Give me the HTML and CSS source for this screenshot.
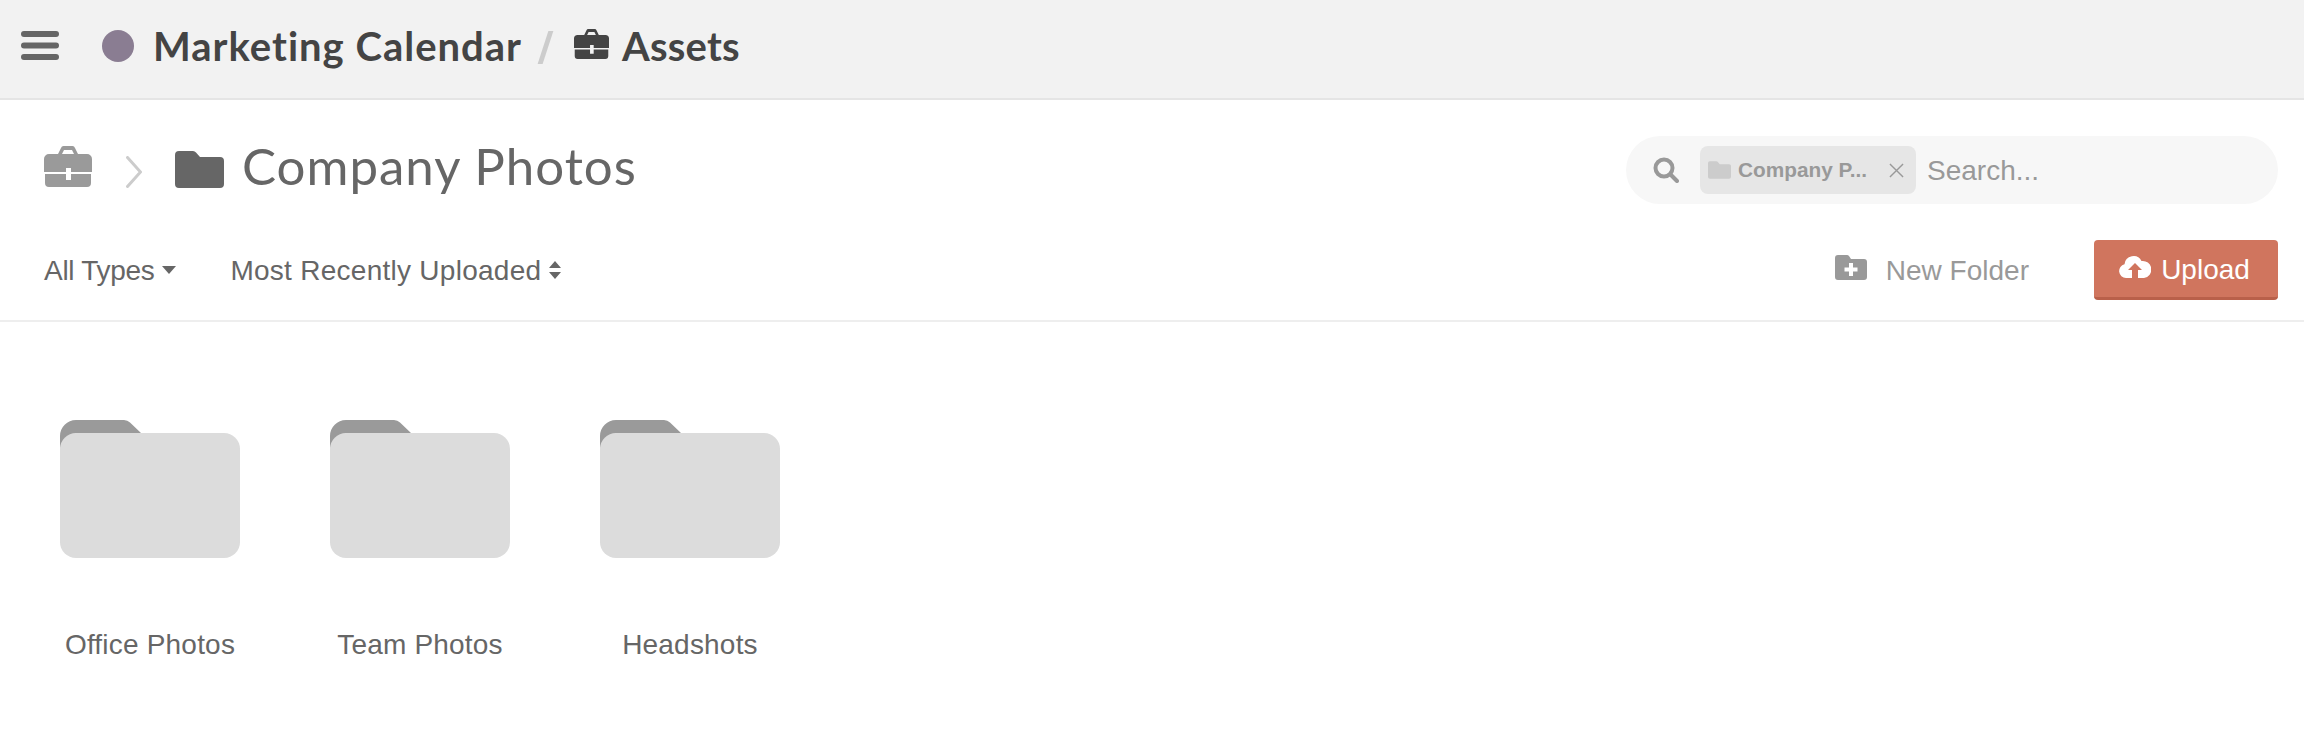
FILE: index.html
```html
<!DOCTYPE html>
<html lang="en">
<head>
    <meta charset="UTF-8">
    <meta name="viewport" content="width=device-width, initial-scale=1.0">
    <title>Assets</title>
    <link rel="stylesheet" href="styles.css">
</head>
<body>
    <svg class="defs" width="0" height="0">
        <symbol id="briefcase" viewBox="0 0 48 41">
            <path d="M14 8l3-6a3 3 0 0 1 3-2h8a3 3 0 0 1 3 2l3 6h-4l-2-4H20l-2 4z"/>
            <path d="M5 8h38a5 5 0 0 1 5 5v13H27v-4h-5v4H0V13a5 5 0 0 1 5-5z"/>
            <path d="M1 28h21v6h5v-6h20v9a4 4 0 0 1-4 4H5a4 4 0 0 1-4-4z"/>
        </symbol>
        <symbol id="folder" viewBox="0 0 49 37">
            <path d="M4 0h14a4 4 0 0 1 3 1.5L25 6h20a4 4 0 0 1 4 4v23a4 4 0 0 1-4 4H4a4 4 0 0 1-4-4V4a4 4 0 0 1 4-4z"/>
        </symbol>
        <symbol id="big-folder" viewBox="0 0 180 138">
            <path fill="#9a9a9a" d="M16 0h48a9 9 0 0 1 6 2.500L81 13H16L0 28V16A16 16 0 0 1 16 0z"/>
            <rect y="13" width="180" height="125" rx="16" fill="#dcdcdc"/>
        </symbol>
    </svg>

    <header class="topbar">
        <svg class="menu-icon" viewBox="0 0 38 29"><rect width="38" height="6" rx="3"/><rect y="11.5" width="38" height="6" rx="3"/><rect y="23" width="38" height="6" rx="3"/></svg>
        <span class="project-dot"></span>
        <span class="crumb crumb-project">Marketing Calendar</span>
        <span class="crumb-sep"></span>
        <svg class="crumb-icon"><use href="#briefcase"/></svg>
        <span class="crumb">Assets</span>
    </header>

    <section class="toolbar">
        <div class="title-row">
            <svg class="root-icon"><use href="#briefcase"/></svg>
            <svg class="chevron" viewBox="0 0 16 32"><path d="M1.5 1.5 14.500 16 1.500 30.500" fill="none" stroke="#ccc" stroke-width="3" stroke-linecap="round"/></svg>
            <svg class="title-folder"><use href="#folder"/></svg>
            <h1>Company Photos</h1>
            <div class="search">
                <svg class="search-icon" viewBox="0 0 26 26"><circle cx="11" cy="11" r="8.500" fill="none" stroke="#999" stroke-width="4"/><path d="M17.500 17.500 24 24" stroke="#999" stroke-width="4" stroke-linecap="round"/></svg>
                <div class="chip">
                    <svg class="chip-folder"><use href="#folder"/></svg>
                    <span class="chip-text">Company P...</span>
                    <svg class="chip-close" viewBox="0 0 16 16"><path d="M1 1 15 15M15 1 1 15" stroke="#999" stroke-width="1.500"/></svg>
                </div>
                <span class="search-text">Search...</span>
            </div>
        </div>
        <div class="filter-row">
            <span class="filter filter-type">All Types<svg class="caret" viewBox="0 0 14 8"><path d="M0 0h14L7 8z"/></svg></span>
            <span class="filter sort">Most Recently Uploaded<svg class="sort-icon" viewBox="0 0 14 18"><path d="M7 0l6 7H1zM7 18l-6-7h12z"/></svg></span>
            <span class="new-folder">
                <svg class="new-folder-icon" viewBox="0 0 32 25"><path fill-rule="evenodd" d="M3 0h9a3 3 0 0 1 2 1l2 3h13a3 3 0 0 1 3 3v15a3 3 0 0 1-3 3H3a3 3 0 0 1-3-3V3a3 3 0 0 1 3-3zM14 8v4.500H9.500v4H14V21h4v-4.500h4.500v-4H18V8z"/></svg>
                New Folder
            </span>
            <button class="upload-btn">
                <svg class="cloud-icon" viewBox="0 0 32 24"><path fill-rule="evenodd" d="M7 23a7 7 0 0 1-1.500-13.800A9 9 0 0 1 22.500 6 8.500 8.500 0 0 1 25 23h-6v-8h4l-7-7-7 7h4v8z"/></svg>
                Upload
            </button>
        </div>
    </section>

    <main class="folders">
        <div class="folder-item">
            <svg class="big-folder"><use href="#big-folder"/></svg>
            <span>Office Photos</span>
        </div>
        <div class="folder-item">
            <svg class="big-folder"><use href="#big-folder"/></svg>
            <span>Team Photos</span>
        </div>
        <div class="folder-item">
            <svg class="big-folder"><use href="#big-folder"/></svg>
            <span>Headshots</span>
        </div>
    </main>
</body>
</html>
```

FILE: styles.css
```css
body {
    margin: 0;
    background-color: #fff;
    font-family: "Liberation Sans", Arial, sans-serif;
    font-size: 28px;
    color: #666;
    overflow: hidden;
}

.defs {
    position: absolute;
}

/* top bar */
.topbar {
    height: 98px;
    display: flex;
    align-items: center;
    padding-left: 21px;
    background-color: #f2f2f2;
    border-bottom: 2px solid #e5e5e5;
}

.menu-icon {
    width: 38px;
    height: 29px;
    fill: #666;
    margin-right: 43px;
    margin-top: -7px;
}

.project-dot {
    width: 32px;
    height: 32px;
    border-radius: 50%;
    background-color: #8a7d92;
    margin-right: 19px;
    margin-top: -6px;
}

.crumb {
    font-family: Lato, sans-serif;
    font-weight: 700;
    font-size: 40px;
    line-height: 48px;
    letter-spacing: 0.2px;
    color: #444;
    margin-top: -6px;
}

.crumb-project {
    letter-spacing: 1px;
}

.crumb-sep {
    width: 5px;
    height: 33px;
    background-color: #ccc;
    transform: skewX(-18deg);
    margin: -3px 26px 0 21px;
}

.crumb-icon {
    width: 35px;
    height: 30px;
    fill: #444;
    margin-right: 13px;
    margin-top: -11px;
}

/* toolbar */
.toolbar {
    padding: 36px 26px 0 44px;
    height: 184px;
    border-bottom: 2px solid #eee;
}

.title-row {
    display: flex;
    align-items: center;
    height: 68px;
}

.root-icon {
    width: 48px;
    height: 41px;
    fill: #9a9a9a;
    margin-top: -8px;
}

.chevron {
    width: 16px;
    height: 32px;
    margin-left: 34px;
    margin-right: 33px;
    margin-top: 3px;
}

.title-folder {
    width: 49px;
    height: 37px;
    fill: #666;
    margin-top: -2px;
}

h1 {
    margin: -10px 0 0 18px;
    font-family: Lato, sans-serif;
    font-weight: 400;
    font-size: 51px;
    letter-spacing: 1px;
    color: #666;
    flex: 1;
}

.search {
    width: 652px;
    height: 68px;
    box-sizing: border-box;
    display: flex;
    align-items: center;
    padding-left: 27px;
    background-color: #f7f7f7;
    border-radius: 34px;
}

.search-icon {
    width: 26px;
    height: 26px;
    margin-right: 21px;
}

.chip {
    width: 216px;
    height: 48px;
    box-sizing: border-box;
    display: flex;
    align-items: center;
    padding-left: 8px;
    background-color: #e6e6e6;
    border-radius: 8px;
}

.chip-folder {
    width: 23px;
    height: 18px;
    fill: #ccc;
}

.chip-text {
    margin-left: 7px;
    font-size: 20.8px;
    font-weight: 700;
    color: #999;
}

.chip-close {
    width: 15px;
    height: 15px;
    margin-left: 22px;
}

.search-text {
    margin-left: 11px;
    padding-top: 2px;
    color: #999;
}

.filter-row {
    display: flex;
    align-items: center;
    height: 60px;
    margin-top: 36px;
}

.filter {
    display: flex;
    align-items: center;
    padding-top: 2px;
    letter-spacing: 0.27px;
}

.filter-type {
    letter-spacing: -0.3px;
}

.caret {
    width: 14px;
    height: 8px;
    fill: #666;
    margin-left: 8px;
    margin-top: -2px;
}

.sort {
    margin-left: 54px;
    flex: 1;
}

.sort-icon {
    width: 14px;
    height: 18px;
    fill: #666;
    margin-left: 7px;
    margin-top: -2px;
}

.new-folder {
    display: flex;
    align-items: center;
    padding-top: 2px;
    color: #999;
    margin-right: 65px;
}

.new-folder-icon {
    width: 32px;
    height: 25px;
    fill: #999;
    margin-right: 19px;
    margin-top: -7px;
}

.upload-btn {
    width: 184px;
    height: 60px;
    display: flex;
    align-items: center;
    justify-content: center;
    padding: 2px 3px 0 0;
    font-family: inherit;
    font-size: 28px;
    color: #fff;
    background-color: #d0755e;
    border: none;
    border-bottom: 3px solid #b9604a;
    border-radius: 4px;
}

.cloud-icon {
    width: 32px;
    height: 24px;
    fill: #fff;
    margin-right: 10px;
    margin-top: -6px;
}

/* folder grid */
.folders {
    display: flex;
    gap: 90px;
    padding: 98px 0 0 60px;
}

.folder-item {
    width: 180px;
    display: flex;
    flex-direction: column;
    align-items: center;
}

.big-folder {
    width: 180px;
    height: 138px;
    margin-bottom: 71px;
}

.folder-item span {
    white-space: nowrap;
    letter-spacing: 0.2px;
}
```
